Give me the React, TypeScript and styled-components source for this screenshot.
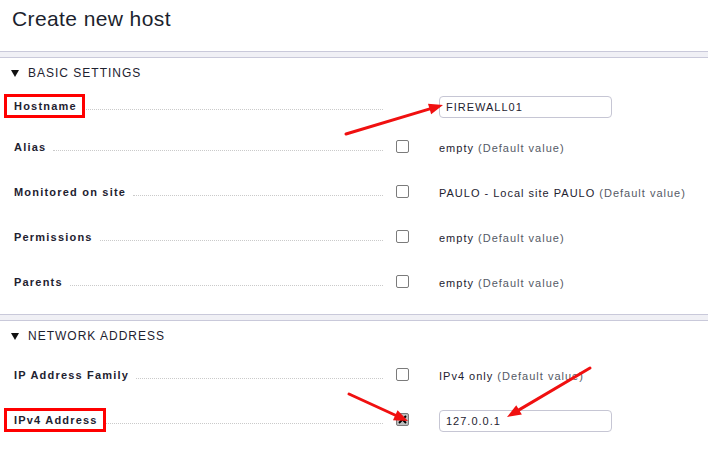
import styled, { createGlobalStyle } from "styled-components";

const GlobalStyle = createGlobalStyle`
  body {
    margin: 0;
    background: #fff;
    font-family: "Liberation Sans", Arial, sans-serif;
    color: #1e2230;
  }
`;

const Page = styled.div`
  position: relative;
  width: 708px;
  height: 450px;
  overflow: hidden;
  background: #fff;
`;

const Title = styled.h1`
  box-sizing: border-box;
  height: 51px;
  margin: 0;
  padding: 6px 0 0 12px;
  font-size: 21px;
  line-height: 25px;
  font-weight: normal;
  letter-spacing: 0.4px;
  color: #1c1f2e;
`;

const Divider = styled.div`
  box-sizing: border-box;
  height: 7px;
  border-top: 1px solid #c9c9da;
  border-bottom: 1px solid #c9c9da;
  background: #f0f0f5;
`;

const Section = styled.section<{ $padTop?: number }>`
  padding-bottom: 9px;
  & > div:nth-child(2) {
    margin-top: ${(p) => p.$padTop ?? 0}px;
  }
`;

const SectionHeader = styled.div`
  display: flex;
  align-items: center;
  height: 30px;
  padding-left: 11px;
  font-size: 12px;
  letter-spacing: 1px;
  text-transform: uppercase;
  color: #1e2230;
`;

const Triangle = styled.span`
  width: 0;
  height: 0;
  border-left: 4.5px solid transparent;
  border-right: 4.5px solid transparent;
  border-top: 7px solid #111;
  margin-right: 9px;
`;

const Rows = styled.div``;

const Row = styled.div<{ $compact?: boolean }>`
  display: flex;
  align-items: center;
  height: ${(p) => (p.$compact ? 37 : 45)}px;
`;

const LabelCell = styled.div`
  box-sizing: border-box;
  display: flex;
  align-items: center;
  width: 383px;
  padding-left: 14px;
`;

const Label = styled.span<{ $marked?: boolean }>`
  position: relative;
  font-size: 11px;
  line-height: 13px;
  font-weight: bold;
  letter-spacing: 1.2px;
  white-space: nowrap;
  color: #1e2230;

  &::after {
    content: "";
    display: ${(p) => (p.$marked ? "block" : "none")};
    position: absolute;
    left: -10px;
    right: -8px;
    top: -6px;
    bottom: -5px;
    border: 3px solid #f00;
  }
`;

const Leader = styled.span`
  flex: 1;
  height: 0;
  margin: 6px 0 0 7px;
  border-top: 1px dotted #cacaca;
`;

const CheckCell = styled.div`
  width: 13px;
  height: 13px;
  margin-left: 13px;
  margin-bottom: 3px;
`;

const Checkbox = styled.span<{ $checked?: boolean }>`
  box-sizing: border-box;
  display: flex;
  align-items: center;
  justify-content: center;
  width: 13px;
  height: 13px;
  border: 1.5px solid #7b7b7b;
  border-radius: 2px;
  background: ${(p) => (p.$checked ? "#bdbdbd" : "#fff")};
`;

const ValueCell = styled.div`
  margin-left: 30px;
  font-size: 11px;
  letter-spacing: 1px;
  white-space: nowrap;
  color: #1e2230;
`;

const Muted = styled.span`
  color: #555a66;
`;

const TextInput = styled.input`
  box-sizing: border-box;
  width: 173px;
  height: 22px;
  padding: 0 6px;
  border: 1px solid #c6c6d4;
  border-radius: 4px;
  font-family: "Liberation Sans", Arial, sans-serif;
  font-size: 11px;
  letter-spacing: 1px;
  color: #1e2230;
  background: #fff;
  outline: none;
`;

const Annotations = styled.svg`
  position: absolute;
  left: 0;
  top: 0;
  pointer-events: none;
`;

type Field = {
  label: string;
  marked?: boolean;
  check?: "none" | "off" | "on";
  value?: string;
  input?: string;
  compact?: boolean;
};

const basic: Field[] = [
  { label: "Hostname", marked: true, check: "none", input: "FIREWALL01", compact: true },
  { label: "Alias", check: "off", value: "empty" },
  { label: "Monitored on site", check: "off", value: "PAULO - Local site PAULO" },
  { label: "Permissions", check: "off", value: "empty" },
  { label: "Parents", check: "off", value: "empty" },
];

const network: Field[] = [
  { label: "IP Address Family", check: "off", value: "IPv4 only" },
  { label: "IPv4 Address", marked: true, check: "on", input: "127.0.0.1" },
];

function FieldRow({ f }: { f: Field }) {
  return (
    <Row $compact={f.compact}>
      <LabelCell>
        <Label $marked={f.marked}>{f.label}</Label>
        <Leader />
      </LabelCell>
      <CheckCell>
        {f.check !== "none" && (
          <Checkbox $checked={f.check === "on"}>
            {f.check === "on" && (
              <svg width="9" height="9" viewBox="0 0 9 9">
                <path d="M1 1 L8 8 M8 1 L1 8" stroke="#000" strokeWidth="1.8" />
              </svg>
            )}
          </Checkbox>
        )}
      </CheckCell>
      <ValueCell>
        {f.input !== undefined ? (
          <TextInput defaultValue={f.input} />
        ) : (
          <>
            {f.value} <Muted>(Default value)</Muted>
          </>
        )}
      </ValueCell>
    </Row>
  );
}

function RedArrow({ x1, y1, x2, y2 }: { x1: number; y1: number; x2: number; y2: number }) {
  const dx = x2 - x1;
  const dy = y2 - y1;
  const len = Math.hypot(dx, dy);
  const ux = dx / len;
  const uy = dy / len;
  const hl = 14;
  const hw = 5.5;
  const bx = x2 - ux * hl;
  const by = y2 - uy * hl;
  const pts = `${x2},${y2} ${bx - uy * hw},${by + ux * hw} ${bx + uy * hw},${by - ux * hw}`;
  return (
    <g>
      <line x1={x1} y1={y1} x2={bx + ux * 2} y2={by + uy * 2} stroke="#f01010" strokeWidth="3" strokeLinecap="round" />
      <polygon points={pts} fill="#f01010" />
    </g>
  );
}

export default function App() {
  return (
    <Page>
      <GlobalStyle />
      <Title>Create new host</Title>
      <Divider />
      <Section>
        <SectionHeader>
          <Triangle />
          Basic settings
        </SectionHeader>
        <Rows>
          {basic.map((f) => (
            <FieldRow key={f.label} f={f} />
          ))}
        </Rows>
      </Section>
      <Divider />
      <Section $padTop={2}>
        <SectionHeader>
          <Triangle />
          Network address
        </SectionHeader>
        <Rows>
          {network.map((f) => (
            <FieldRow key={f.label} f={f} />
          ))}
        </Rows>
      </Section>
      <Annotations width="708" height="450">
        <RedArrow x1={346} y1={134} x2={443} y2={105} />
        <RedArrow x1={349} y1={394} x2={408} y2={421} />
        <RedArrow x1={590} y1={368} x2={507} y2={417} />
      </Annotations>
    </Page>
  );
}
